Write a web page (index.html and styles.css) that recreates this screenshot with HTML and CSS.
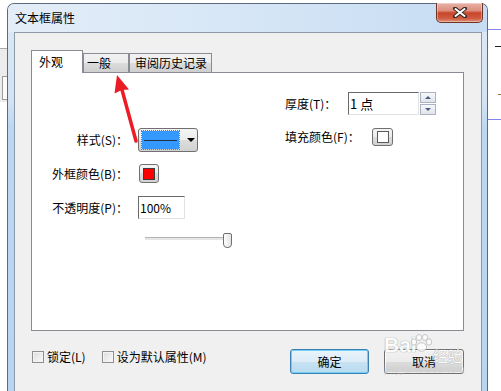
FILE: index.html
```html
<!DOCTYPE html>
<html lang="zh-CN">
<head>
  <meta charset="UTF-8" />
  <title>文本框属性</title>
  <link rel="stylesheet" href="styles.css">
</head>
<body>

  <div class="desk-left">
    <div class="desk-left-top"></div>
    <div class="desk-left-mid"><div class="desk-left-box"></div></div>
  </div>

  <div class="window">
    <div class="titlebar">
      <span class="title">文本框属性</span>
      <div class="close-btn">
        <svg width="14" height="11" viewBox="0 0 14 11">
          <path d="M2 1.5 L12 9.5 M12 1.5 L2 9.5" stroke="#3a2a26" stroke-width="4" stroke-linecap="round"/>
          <path d="M2.5 2 L11.5 9 M11.5 2 L2.5 9" stroke="#fff" stroke-width="2" stroke-linecap="round"/>
        </svg>
      </div>
    </div>

    <div class="frame">
      <div class="client">
        <div class="tabs">
          <div class="tab active">外观</div>
          <div class="tab tab-general">一般</div>
          <div class="tab tab-history">审阅历史记录</div>
        </div>

        <div class="panel">
          <div class="row row-1">
            <div class="field right-field">
              <span class="label-thick">厚度(T)：</span>
              <div class="textbox textbox-thick">1 点</div>
              <div class="spinner">
                <div class="spin-btn"><span class="tri-up"></span></div>
                <div class="spin-btn"><span class="tri-down"></span></div>
              </div>
            </div>
          </div>

          <div class="row row-2">
            <div class="label">样式(S)：</div>
            <div class="combo">
              <div class="combo-preview"><span class="combo-line"></span></div>
              <span class="tri-down combo-arrow"></span>
            </div>
            <div class="field right-field fill-field">
              <span class="label-fill">填充颜色(F)：</span>
              <div class="color-btn color-btn-fill"><span class="swatch swatch-none"></span></div>
            </div>
          </div>

          <div class="row row-3">
            <div class="label">外框颜色(B)：</div>
            <div class="color-btn color-btn-line"><span class="swatch swatch-red"></span></div>
          </div>

          <div class="row row-4">
            <div class="label">不透明度(P)：</div>
            <div class="textbox textbox-opacity">100%</div>
          </div>

          <div class="row row-5">
            <div></div>
            <div class="slider">
              <div class="slider-track"></div>
              <div class="slider-thumb"></div>
            </div>
          </div>
        </div>

        <div class="footer">
          <label class="check"><span class="check-box"></span>锁定(L)</label>
          <label class="check check-default"><span class="check-box"></span>设为默认属性(M)</label>
          <div class="buttons">
            <button class="btn btn-ok">确定</button>
            <button class="btn">取消</button>
          </div>
        </div>
      </div>
    </div>
  </div>

  <div class="desk-right">
    <div class="desk-right-top"></div>
    <div class="desk-right-mid">
      <span class="dash dash-1"></span>
      <span class="dash dash-2"></span>
    </div>
  </div>

  <svg class="arrow" width="501" height="391" viewBox="0 0 501 391">
    <line x1="136" y1="141" x2="121.5" y2="88" stroke="#ec1c24" stroke-width="3.5" stroke-linecap="round"/>
    <polygon points="117,75 114.5,93.5 121.8,90 129,89.5" fill="#ec1c24"/>
  </svg>

  <div class="watermark">
    <div class="wm-logo">
      <span class="wm-bai">Bai</span>
      <svg class="wm-paw" width="24" height="18" viewBox="0 0 24 18">
        <g fill="#fff" stroke="#bdbdbd" stroke-width="1">
          <ellipse cx="5" cy="8" rx="2.6" ry="3.2"/>
          <ellipse cx="10" cy="3.5" rx="2.6" ry="3"/>
          <ellipse cx="16" cy="3.5" rx="2.6" ry="3"/>
          <ellipse cx="20" cy="8" rx="2.6" ry="3.2"/>
          <ellipse cx="12.5" cy="13" rx="5" ry="4.2"/>
        </g>
      </svg>
      <span class="wm-jy">经验</span>
    </div>
    <div class="wm-url">jingyan.baidu.com</div>
  </div>

</body>
</html>
```

FILE: styles.css
```css
* {
  margin: 0;
  padding: 0;
  box-sizing: border-box;
}
body {
  width: 501px;
  height: 391px;
  overflow: hidden;
  display: flex;
  position: relative;
  background: #fff;
  font-family: "Noto Sans CJK SC", "Liberation Sans", sans-serif;
  font-size: 12px;
  line-height: 16px;
  color: #000;
}

/* desktop bits around the dialog */
.desk-left {
  width: 7px;
  flex: none;
}
.desk-left-top {
  height: 49px;
  background: #fff;
  border-bottom: 1px solid #a9a9a9;
}
.desk-left-mid {
  height: 53px;
  background: #ececec;
  padding-top: 27px;
}
.desk-left-box {
  height: 24px;
  margin-left: 2px;
  border: 1px solid #9c9c9c;
  border-right: none;
  background: #fbfbfb;
}
.desk-right {
  width: 13px;
  flex: none;
}
.desk-right-top {
  height: 30px;
  border-bottom: 1px solid #8585ee;
}
.desk-right-mid {
  height: 90px;
  border-bottom: 1px solid #8585ee;
  display: flex;
  flex-direction: column;
  align-items: flex-end;
}
.dash {
  display: block;
  height: 1px;
  background: #222;
}
.dash-1 {
  width: 6px;
  margin-top: 16px;
}
.dash-2 {
  width: 3px;
  margin-top: 47px;
  background: #8a7a40;
}

/* window chrome */
.window {
  width: 481px;
  flex: none;
  margin-top: 3px;
  border: 1px solid #5b6a7d;
  border-bottom: none;
  border-radius: 7px 7px 0 0;
  background: linear-gradient(#dde8f4, #d3e3f3 25%, #bcd7f2 32%, #b7d4f1);
  display: flex;
  flex-direction: column;
}
.titlebar {
  height: 28px;
  flex: none;
  display: flex;
  align-items: flex-start;
  padding-left: 7px;
  border-radius: 6px 6px 0 0;
  background: linear-gradient(90deg, #e3edf8, #d6e6f6 50%, #c6dcf3);
}
.title {
  line-height: 28px;
  color: #000;
}
.close-btn {
  margin-left: auto;
  margin-right: 4px;
  margin-top: -1px;
  width: 47px;
  height: 20px;
  border: 1px solid #6d3427;
  border-top: none;
  border-radius: 0 0 5px 5px;
  background: linear-gradient(#e8b2a6, #dc8f7d 40%, #c7462c 52%, #cf5a3f 80%, #e0917a);
  box-shadow: inset 0 0 0 1px rgba(255, 255, 255, 0.35);
  display: flex;
  align-items: center;
  justify-content: center;
}
.frame {
  flex: 1;
  display: flex;
  padding: 0 5px 0 6px;
}
.client {
  flex: 1;
  border: 1px solid #8c99a8;
  border-bottom: none;
  background: #f0f0f0;
  padding: 17px 17px 0 16px;
}

/* tabs */
.tabs {
  height: 22px;
  display: flex;
  align-items: flex-end;
}
.tab {
  height: 19px;
  border: 1px solid #898c95;
  border-bottom: none;
  line-height: 18px;
  padding-left: 3px;
  background: linear-gradient(#f2f2f2, #ebebeb 50%, #dddddd 50%, #cfcfcf);
}
.tab.active {
  position: relative;
  z-index: 1;
  width: 52px;
  height: 23px;
  margin-bottom: -1px;
  line-height: 21px;
  padding-left: 7px;
  background: #fff;
}
.tab-general {
  width: 46px;
}
.tab-history {
  width: 83px;
  padding-left: 5px;
}
.panel {
  width: 433px;
  height: 259px;
  border: 1px solid #898c95;
  background: #fff;
  padding-top: 19px;
}

/* form rows */
.row {
  display: grid;
  grid-template-columns: 106px 147px auto;
  align-items: center;
}
.row-1 {
  height: 23px;
}
.row-1 .right-field {
  grid-column: 3;
}
.row-2 {
  height: 24px;
  margin-top: 13px;
}
.row-3 {
  height: 19px;
  margin-top: 12px;
}
.row-4 {
  height: 23px;
  margin-top: 13px;
}
.row-5 {
  height: 15px;
  margin-top: 14px;
}
.label {
  text-align: right;
  padding-right: 10px;
  white-space: nowrap;
}
.field {
  display: flex;
  align-items: center;
}
.fill-field {
  align-self: start;
  height: 18px;
}
.label-thick {
  width: 63px;
}
.label-fill {
  width: 87px;
}
.textbox {
  height: 23px;
  border: 1px solid;
  border-color: #6a6a6a #e2e2e2 #e2e2e2 #6a6a6a;
  background: #fff;
  line-height: 21px;
  padding-left: 1px;
}
.textbox-thick {
  width: 71px;
  font-size: 13px;
}
.textbox-opacity {
  width: 47px;
}
.spinner {
  width: 16px;
  height: 23px;
  margin-left: 1px;
  display: flex;
  flex-direction: column;
  gap: 1px;
}
.spin-btn {
  flex: 1;
  border: 1px solid #aab3c2;
  background: linear-gradient(#f7f8fa, #dfe4eb);
  display: flex;
  align-items: center;
  justify-content: center;
}
.tri-up,
.tri-down {
  width: 0;
  height: 0;
  border-left: 3px solid transparent;
  border-right: 3px solid transparent;
}
.tri-up {
  border-bottom: 3px solid #4b5d80;
}
.tri-down {
  border-top: 3px solid #4b5d80;
}

/* combo box */
.combo {
  width: 60px;
  height: 24px;
  border: 1px solid #707070;
  border-radius: 3px;
  background: linear-gradient(#f4f4f4, #ebebeb 50%, #dddddd 50%, #d2d2d2);
  display: flex;
  align-items: center;
  padding-left: 3px;
}
.combo-preview {
  width: 37px;
  height: 18px;
  background: #3399ff;
  outline: 1px dotted #b86a10;
  display: flex;
  align-items: center;
  padding: 0 2px;
}
.combo-line {
  flex: 1;
  height: 1px;
  background: #23344a;
}
.combo-arrow {
  margin-left: 8px;
  border-left-width: 4px;
  border-right-width: 4px;
  border-top: 4px solid #000;
}

/* colour buttons */
.color-btn {
  border: 1px solid #707070;
  border-radius: 3px;
  background: linear-gradient(#f4f4f4, #ebebeb 50%, #dddddd 50%, #d2d2d2);
  display: flex;
  align-items: center;
  justify-content: center;
}
.color-btn-line {
  width: 20px;
  height: 19px;
  margin-left: 1px;
}
.color-btn-fill {
  width: 21px;
  height: 18px;
}
.swatch {
  width: 12px;
  height: 12px;
  border: 1px solid #3c3c3c;
}
.swatch-red {
  background: #ff0000;
}
.swatch-none {
  background: #fff;
  border-color: #5a5a5a;
}

/* slider */
.slider {
  position: relative;
  width: 87px;
  height: 15px;
  margin-left: 7px;
}
.slider-track {
  position: absolute;
  left: 0;
  right: 4px;
  top: 4px;
  height: 3px;
  border-top: 1px solid #b4b4b4;
  background: #e6e6e6;
}
.slider-thumb {
  position: absolute;
  right: 0;
  top: 0;
  width: 9px;
  height: 15px;
  border: 1px solid #707070;
  border-radius: 2px 2px 4px 4px;
  background: linear-gradient(90deg, #fdfdfd, #e4e4e4);
}

/* bottom area */
.footer {
  height: 25px;
  margin-top: 18px;
  display: flex;
  align-items: flex-start;
}
.check {
  display: flex;
  align-items: center;
  gap: 3px;
  height: 13px;
  margin-top: 1px;
  margin-left: 1px;
  line-height: 13px;
}
.check-default {
  margin-left: 16px;
}
.check-box {
  width: 12px;
  height: 12px;
  border: 1px solid #8e8f8f;
  background: linear-gradient(135deg, #dcdcdc, #fbfbfb);
  box-shadow: inset 0 0 0 1px #f4f4f4;
}
.buttons {
  margin-left: auto;
  display: flex;
  gap: 15px;
}
.btn {
  width: 80px;
  height: 25px;
  border: 1px solid #707070;
  border-radius: 3px;
  background: linear-gradient(#f2f2f2, #ebebeb 50%, #dddddd 50%, #cfcfcf);
  box-shadow: inset 0 0 0 1px rgba(255, 255, 255, 0.8);
  font-family: inherit;
  font-size: 12px;
  color: #000;
}
.btn-ok {
  width: 79px;
  border-color: #3c7fb1;
  background: linear-gradient(#eaf4fb, #dcecf7 50%, #c8e2f2 50%, #b9dbef);
  box-shadow: inset 0 0 0 1px #6fd2f5;
}

/* overlays */
.arrow {
  position: absolute;
  left: 0;
  top: 0;
  pointer-events: none;
}
.watermark {
  position: absolute;
  left: 384px;
  top: 333px;
  pointer-events: none;
  opacity: 0.85;
}
.wm-logo {
  display: flex;
  align-items: flex-start;
}
.wm-bai {
  font-family: "Liberation Sans", sans-serif;
  font-weight: bold;
  font-size: 21px;
  line-height: 24px;
  color: #fff;
  text-shadow: 0 0 1px #9a9a9a, 0 0 1px #9a9a9a;
}
.wm-paw {
  margin-left: -8px;
  margin-top: 1px;
}
.wm-jy {
  margin-top: 14px;
  font-size: 15px;
  line-height: 17px;
  color: #fff;
  text-shadow: 0 0 1px #9a9a9a, 0 0 1px #9a9a9a;
}
.wm-url {
  margin-top: 1px;
  font-family: "Liberation Sans", sans-serif;
  font-size: 10px;
  line-height: 10px;
  color: rgba(210, 210, 210, 0.8);
}
```
